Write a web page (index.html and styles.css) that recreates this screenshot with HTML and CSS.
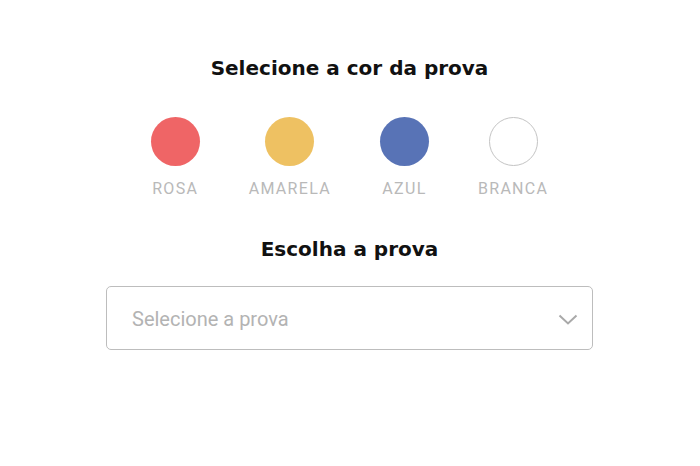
FILE: index.html
```html
<!DOCTYPE html>
<html lang="pt">
<head>
<meta charset="utf-8">
<link rel="stylesheet" href="styles.css">
</head>
<body>
<main class="page">
  <h1 class="title">Selecione a cor da prova</h1>
  <div class="colors">
    <div class="color"><span class="dot dot-rosa"></span><span class="label">ROSA</span></div>
    <div class="color"><span class="dot dot-amarela"></span><span class="label">AMARELA</span></div>
    <div class="color"><span class="dot dot-azul"></span><span class="label">AZUL</span></div>
    <div class="color"><span class="dot dot-branca"></span><span class="label">BRANCA</span></div>
  </div>
  <h2 class="title title-2">Escolha a prova</h2>
  <div class="select">
    <span class="placeholder">Selecione a prova</span>
    <svg class="chevron" width="20" height="11" viewBox="0 0 20 11"><path d="M1.5 1.5 L10 9.5 L18.5 1.5" fill="none" stroke="#a9a9a9" stroke-width="2"/></svg>
  </div>
</main>
</body>
</html>
```

FILE: styles.css
```css
* { box-sizing: border-box; }
html, body { margin: 0; padding: 0; background: #fff; }
.page {
  display: flex;
  flex-direction: column;
  align-items: center;
  padding-top: 56px;
  padding-right: 1px;
}
.title {
  margin: 0;
  font-family: "DejaVu Sans", Inter, sans-serif;
  font-weight: 700;
  font-size: 20px;
  line-height: 24px;
  color: #111;
}
.title-2 {
  margin-top: 38px;
}
.colors {
  display: flex;
  gap: 49px;
  margin-top: 37px;
}
.color {
  display: flex;
  flex-direction: column;
  align-items: center;
}
.dot {
  width: 49px;
  height: 49px;
  border-radius: 50%;
  display: block;
}
.dot-rosa { background: #ef6566; }
.dot-amarela { background: #eec162; }
.dot-azul { background: #5873b6; }
.dot-branca { background: #fff; border: 1px solid #c4c4c4; }
.label {
  margin-top: 13px;
  font-family: Roboto, "Liberation Sans", sans-serif;
  font-size: 16px;
  line-height: 20px;
  letter-spacing: 1.3px;
  color: #b9b9b9;
}
.select {
  margin-top: 25px;
  width: 487px;
  height: 64px;
  border: 1px solid #bdbdbd;
  border-radius: 5px;
  display: flex;
  align-items: center;
  justify-content: space-between;
  padding: 2px 14px 0 25px;
}
.placeholder {
  font-family: Roboto, "Liberation Sans", sans-serif;
  font-size: 20px;
  color: #b3b3b3;
}
.chevron { display: block; }
```
